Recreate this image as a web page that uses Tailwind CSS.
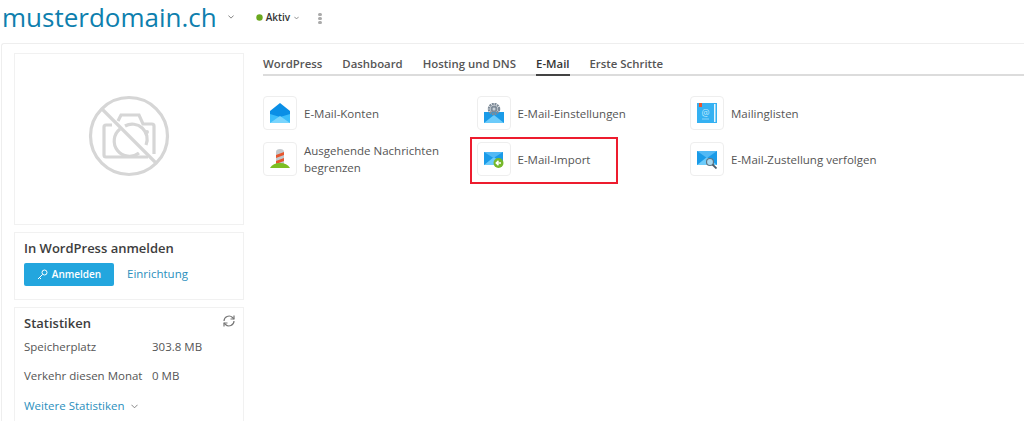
<!DOCTYPE html>
<html lang="de">
<head>
    <meta charset="UTF-8">
    <title>musterdomain.ch</title>
    <script src="https://cdn.jsdelivr.net/npm/@tailwindcss/browser@4"></script>
</head>
<body class="bg-white h-[421px] overflow-hidden font-['Open_Sans',sans-serif] text-[#555]">
    <header class="h-[43px] pl-[2px] flex items-center">
        <h1 class="text-[26px] leading-[30px] text-[#0e7fae] -mt-[10px]">musterdomain.ch</h1>
        <svg class="ml-[11px] -mt-[9px]" width="6" height="4" viewBox="0 0 8 5" fill="none" stroke="#777" stroke-width="1.200"><path d="M.5.5 4 4 7.500.5"/></svg>
        <svg class="ml-[22px] -mt-[9px]" width="7" height="7" viewBox="0 0 7 7"><circle cx="3.500" cy="3.500" r="3.200" fill="#6aa81e"/></svg>
        <span class="ml-[3px] -mt-[9px] text-[10px] font-semibold text-[#333]">Aktiv</span>
        <svg class="ml-[4px] -mt-[8px]" width="5" height="4" viewBox="0 0 8 5" fill="none" stroke="#777" stroke-width="1.300"><path d="M.5.5 4 4 7.500.5"/></svg>
        <div class="ml-[19px] -mt-[7px] flex flex-col gap-[1px]">
            <span class="w-[4px] h-[3px] rounded-full bg-[#aaa]"></span>
            <span class="w-[4px] h-[3px] rounded-full bg-[#aaa]"></span>
            <span class="w-[4px] h-[3px] rounded-full bg-[#aaa]"></span>
        </div>
    </header>

    <div class="ml-[1px] h-[378px] overflow-hidden border-t border-l border-[#eeeeee] rounded-tl-[3px] flex pl-[12px] pt-[9px]">
        <aside class="w-[230px] shrink-0 flex flex-col gap-[7px]">
            <div class="h-[172px] shrink-0 border border-[#f1f1f1] flex items-center justify-center">
                <svg class="-mt-[6px]" width="82" height="82" viewBox="0 0 82 82" fill="none" stroke="#d6d6d6" stroke-width="3.200">
                    <circle cx="41" cy="41" r="38.500"/>
                    <path d="M14 14 68 68"/>
                    <path d="M24 30h-6a2 2 0 0 0-2 2v28a2 2 0 0 0 2 2h42"/>
                    <path d="M30 26l3-6h18l4 9h9a2 2 0 0 1 2 2v28"/>
                    <path d="M32 34a15 15 0 0 0 19 24M37 31a15 15 0 0 1 21 19"/>
                    <circle cx="59" cy="37" r="1" stroke-width="2"/>
                </svg>
            </div>
            <div class="h-[68px] shrink-0 border border-[#f1f1f1] pl-[9px] pt-[6px]">
                <h2 class="text-[13px] leading-[18px] font-semibold text-[#3d3d3d]">In WordPress anmelden</h2>
                <div class="mt-[6px] flex items-center">
                    <button class="w-[90px] h-[23px] bg-[#23a6de] rounded-[2px] flex items-center justify-center gap-[4px] text-white text-[10px] font-semibold">
                        <svg width="11" height="11" viewBox="0 0 11 11" fill="none" stroke="#fff" stroke-width="1"><circle cx="7.500" cy="3.500" r="2.500"/><path d="M5.500 5.500 1 10M2.500 8.500 4 10"/></svg>
                        Anmelden
                    </button>
                    <a class="ml-[13px] -mt-[2px] text-[11.5px] text-[#2b8fbd]">Einrichtung</a>
                </div>
            </div>
            <div class="h-[130px] shrink-0 border border-[#f1f1f1] pl-[9px] pr-[7px] pt-[6px] relative">
                <svg class="absolute right-[7px] top-[6px]" width="14" height="14" viewBox="0 0 14 14" fill="none" stroke="#777" stroke-width="1.200">
                    <path d="M2 7a5 5 0 0 1 8.500-3.500L12 5M12 7a5 5 0 0 1-8.500 3.500L2 9"/>
                    <path d="M12 1.500V5H8.500M2 12.500V9h3.500"/>
                </svg>
                <h2 class="text-[13px] leading-[18px] font-semibold text-[#3d3d3d]">Statistiken</h2>
                <div class="mt-[7px] grid grid-cols-[128px_1fr] text-[11.5px] leading-[16px] gap-y-[13px]">
                    <span>Speicherplatz</span><span>303.8 MB</span>
                    <span>Verkehr diesen Monat</span><span>0 MB</span>
                </div>
                <a class="mt-[14px] flex items-center gap-[6px] text-[11.5px] leading-[16px] text-[#2b8fbd]">
                    Weitere Statistiken
                    <svg width="7" height="5" viewBox="0 0 8 5" fill="none" stroke="#777" stroke-width="1"><path d="M.5.5 4 4 7.500.5"/></svg>
                </a>
            </div>
        </aside>

        <main class="flex-1 ml-[19px]">
            <nav class="h-[23px] border-b-2 border-[#dcdcdc] flex gap-[20px] text-[11.4px] leading-[21px] font-semibold text-[#555]">
                <a>WordPress</a>
                <a>Dashboard</a>
                <a>Hosting und DNS</a>
                <a class="h-[23px] border-b-2 border-[#444] text-[#333]">E-Mail</a>
                <a>Erste Schritte</a>
            </nav>

            <div class="mt-[20px] grid grid-cols-[213.5px_213.5px_1fr] gap-y-[12px] text-[11.5px] leading-[17px] text-[#555]">
                <div class="flex items-center gap-[7px] h-[34px]">
                    <div class="size-[34px] shrink-0 border border-[#eeeeee] rounded-[4px] flex items-center justify-center">
                        <svg width="20" height="20" viewBox="0 0 20 20">
                            <path d="M0 8 10 0l10 8v12H0z" fill="#0a8fe6"/>
                            <path d="M0 11l10 3 10-3v9H0z" fill="#3bbdfb"/>
                            <path d="M0 20 10 13l10 7z" fill="#7ad5fd"/>
                        </svg>
                    </div>
                    <span>E-Mail-Konten</span>
                </div>
                <div class="flex items-center gap-[7px] h-[34px]">
                    <div class="size-[34px] shrink-0 border border-[#eeeeee] rounded-[4px] flex items-center justify-center">
                        <svg width="20" height="20" viewBox="0 0 20 20">
                            <path d="M0 9h20v11H0z" fill="#1a9be8"/>
                            <path d="M0 20 10 12l10 8z" fill="#6ccbfa"/>
                            <circle cx="10" cy="6" r="5" fill="none" stroke="#7f8c99" stroke-width="2.500" stroke-dasharray="2 .6"/>
                            <circle cx="10" cy="6" r="3.500" fill="#7f8c99"/>
                            <circle cx="10" cy="6" r="1.500" fill="#c9d1d8"/>
                        </svg>
                    </div>
                    <span>E-Mail-Einstellungen</span>
                </div>
                <div class="flex items-center gap-[7px] h-[34px]">
                    <div class="size-[34px] shrink-0 border border-[#eeeeee] rounded-[4px] flex items-center justify-center">
                        <svg width="20" height="20" viewBox="0 0 20 20">
                            <path d="M0 0h20v20H0z" fill="#35b1f2"/>
                            <path d="M2 0h3v4H2z" fill="#e8552d"/>
                            <path d="M17 1h1.500v18H17z" fill="#e8f6fe"/>
                            <text x="8.500" y="12.500" text-anchor="middle" font-size="9" fill="#bfe8fd">@</text>
                            <path d="M5 16h7" stroke="#8ad6fb" stroke-width="1"/>
                        </svg>
                    </div>
                    <span>Mailinglisten</span>
                </div>
                <div class="flex items-center gap-[7px] h-[34px]">
                    <div class="size-[34px] shrink-0 border border-[#eeeeee] rounded-[4px] flex items-center justify-center">
                        <svg width="20" height="22" viewBox="0 0 20 22">
                            <path d="M6 17V4q0-3 4-3t4 3v13z" fill="#c3c8cc"/>
                            <path d="M6 7l8-3v3l-8 3zM6 13l8-3v3l-8 3z" fill="#e8552d"/>
                            <path d="M0 20q3-5 10-5t10 5z" fill="#7cbf22"/>
                        </svg>
                    </div>
                    <span class="w-[150px]">Ausgehende Nachrichten begrenzen</span>
                </div>
                <div class="flex items-center gap-[7px] h-[34px]">
                    <div class="size-[34px] shrink-0 border border-[#eeeeee] rounded-[4px] flex items-center justify-center">
                        <svg width="20" height="20" viewBox="0 0 20 20">
                            <path d="M0 3h19v13H0z" fill="#1a9be8"/>
                            <path d="M0 16 10 8l9 8z" fill="#6ccbfa"/>
                            <path d="M0 3l9.500 6L19 3z" fill="#52b9f5"/>
                            <circle cx="14.500" cy="14" r="5" fill="#76b82a"/>
                            <path d="M17 14h-4M14.500 11.800 12.300 14l2.200 2.200" fill="none" stroke="#fff" stroke-width="1.500"/>
                        </svg>
                    </div>
                    <span>E-Mail-Import</span>
                </div>
                <div class="flex items-center gap-[7px] h-[34px]">
                    <div class="size-[34px] shrink-0 border border-[#eeeeee] rounded-[4px] flex items-center justify-center">
                        <svg width="20" height="20" viewBox="0 0 20 20">
                            <path d="M0 2h20v14H0z" fill="#1a9be8"/>
                            <path d="M0 16 10 8l10 8z" fill="#6ccbfa"/>
                            <path d="M0 2l10 7 10-7z" fill="#52b9f5"/>
                            <circle cx="13" cy="13" r="3.500" fill="#a9d8ef" stroke="#5f7482" stroke-width="1.200"/>
                            <path d="M15.500 15.500 19.500 19.500" stroke="#4f5d68" stroke-width="1.800"/>
                        </svg>
                    </div>
                    <span>E-Mail-Zustellung verfolgen</span>
                </div>
            </div>
        </main>
    </div>

    <!-- highlight drawn over the screenshot -->
    <div class="absolute left-[470px] top-[137px] w-[148px] h-[47px] border-[2.5px] border-[#ed1c2e]"></div>
</body>
</html>
